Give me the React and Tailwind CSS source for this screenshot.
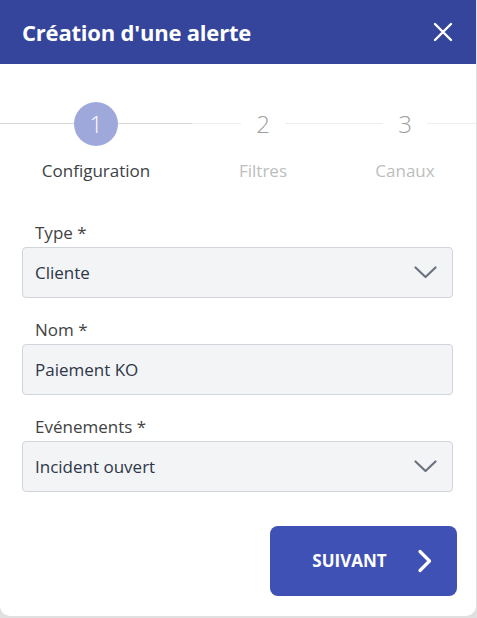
import React from 'react';

function ChevronDown() {
  return (
    <svg width="23" height="13" viewBox="0 0 23 13" fill="none" className="shrink-0">
      <path d="M1.5 1.5 L11.5 11 L21.5 1.5" stroke="#6b7280" strokeWidth="2.2" strokeLinecap="round" strokeLinejoin="round" />
    </svg>
  );
}

function SelectField({ label, value, chevron }) {
  return (
    <div className="flex flex-col">
      <label className="px-[13px] text-[17px] leading-[23px] text-[#424242] mb-[3px]">{label}</label>
      <div className="h-[51px] flex items-center justify-between px-[12px] bg-[#f3f4f6] border border-[#d1d5db] rounded-[4px]">
        <span className="text-[17px] text-[#2d3748]">{value}</span>
        {chevron && (
          <span className="mr-[3px]">
            <ChevronDown />
          </span>
        )}
      </div>
    </div>
  );
}

export default function App() {
  const steps = [
    { n: 1, label: 'Configuration', active: true },
    { n: 2, label: 'Filtres' },
    { n: 3, label: 'Canaux' },
  ];

  return (
    <div className="w-[477px] h-[618px] bg-[#e0e0e0]" style={{ fontFamily: '"Open Sans", "Noto Sans", sans-serif' }}>
      <div className="w-[476px] h-[616px] bg-white rounded-b-[10px] flex flex-col overflow-hidden">
        {/* header */}
        <div className="h-[64px] shrink-0 bg-[#34459b] flex items-center justify-between pl-[22px] pr-[23px]">
          <h1 className="text-[22px] font-bold text-white tracking-[-0.2px]">Création d'une alerte</h1>
          <button className="text-white">
            <svg width="20" height="20" viewBox="0 0 20 20" fill="none">
              <path d="M2 2 L18 18 M18 2 L2 18" stroke="white" strokeWidth="2.4" strokeLinecap="round" />
            </svg>
          </button>
        </div>

        {/* stepper */}
        <div className="grid grid-cols-[192px_142px_1fr] mt-[38px]">
          {steps.map((s, i) => (
            <div key={s.n} className="flex flex-col items-center">
              <div className="relative w-full flex justify-center h-[44px] items-center">
                <div className={'absolute top-[21px] h-px left-0 w-1/2 ' + (i === 0 ? 'bg-[#d6d6d6]' : 'bg-[#eeeeee]')} />
                <div className={'absolute top-[21px] h-px right-0 w-1/2 ' + (i === 0 ? 'bg-[#d6d6d6]' : 'bg-[#eeeeee]')} />
                {s.active ? (
                  <div className="relative z-10 w-[44px] h-[44px] rounded-full bg-[#9fa8da] flex items-center justify-center text-white text-[23px] font-light">
                    {s.n}
                  </div>
                ) : (
                  <div className="relative z-10 w-[44px] h-[44px] bg-white flex items-center justify-center text-[#9e9e9e] text-[24px] font-light">
                    {s.n}
                  </div>
                )}
              </div>
              <span className={'mt-[13px] text-[17px] leading-[23px] ' + (s.active ? 'text-[#3c3f44]' : 'text-[#bdbdbd]')}>{s.label}</span>
            </div>
          ))}
        </div>

        {/* form */}
        <div className="pl-[22px] pr-[23px] mt-[39px] flex flex-col gap-[20px]">
          <SelectField label="Type *" value="Cliente" chevron />
          <SelectField label="Nom *" value="Paiement KO" />
          <SelectField label="Evénements *" value="Incident ouvert" chevron />
        </div>

        <div className="flex justify-end pr-[19px] mt-[34px]">
          <button className="w-[187px] h-[70px] bg-[#3f51b5] rounded-[8px] flex items-center justify-center gap-[30px] pl-[18px]">
            <span className="text-white font-bold text-[17px]">SUIVANT</span>
            <svg width="16" height="24" viewBox="0 0 16 24" fill="none">
              <path d="M3 2.5 L12.5 12 L3 21.5" stroke="white" strokeWidth="3.2" strokeLinecap="round" strokeLinejoin="round" />
            </svg>
          </button>
        </div>
      </div>
    </div>
  );
}
